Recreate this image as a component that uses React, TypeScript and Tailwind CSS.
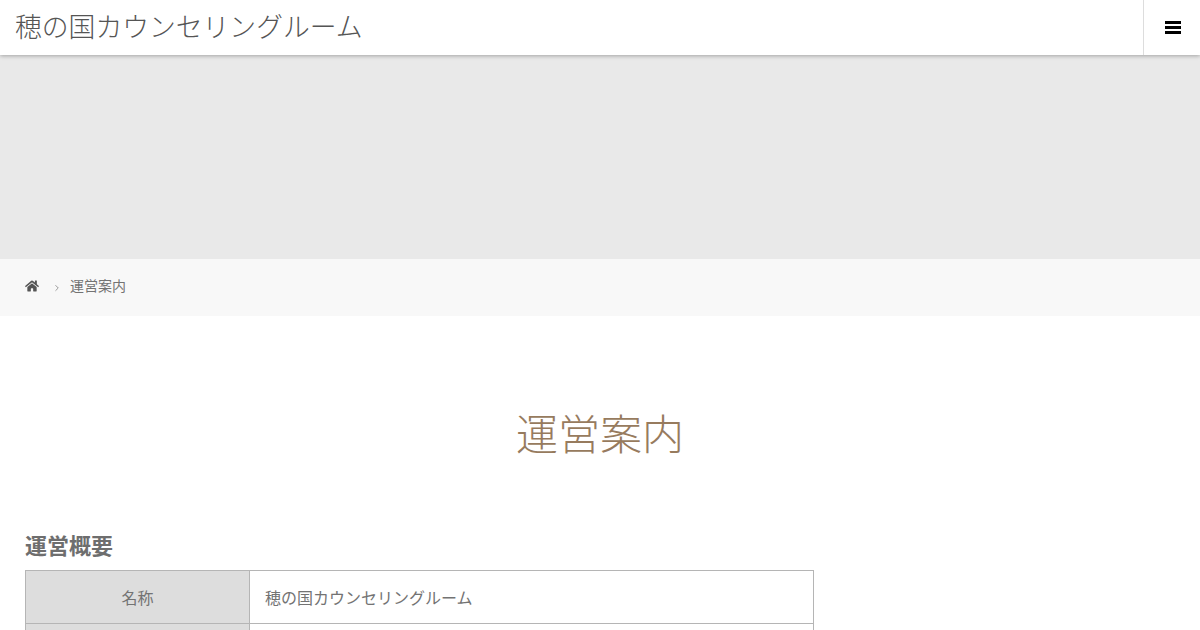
import { FaHome } from "react-icons/fa";
import { FiChevronRight } from "react-icons/fi";

const font = { fontFamily: '"Liberation Sans", "Noto Sans CJK JP", sans-serif' };

export default function App() {
  return (
    <div className="h-[630px] overflow-hidden bg-white text-[#737373]" style={font}>
      <header className="relative z-10 flex h-[55px] items-center justify-between bg-white shadow-[0_1px_4px_rgba(0,0,0,0.3)]">
        <h1 className="pl-[15px] pt-[1px] text-[26.8px] font-light leading-none text-[#555]">穂の国カウンセリングルーム</h1>
        <div className="flex h-full w-[57px] items-center justify-center border-l border-[#ddd] pl-[2px]">
          <div className="flex w-4 flex-col gap-[2px]">
            <span className="h-[3px] bg-black" />
            <span className="h-[3px] bg-black" />
            <span className="h-[3px] bg-black" />
          </div>
        </div>
      </header>

      <div className="h-[204px] bg-[#e9e9e9]" />

      <nav className="flex h-[57px] items-center bg-[#f8f8f8] pb-[4px] pl-[25px] text-sm">
        <FaHome size={14} className="text-[#555]" />
        <FiChevronRight size={10} className="ml-[13px] mt-[4px] text-[#888]" />
        <span className="ml-[8px]">運営案内</span>
      </nav>

      <main className="px-[25px]">
        <h2 className="mt-[93px] text-center text-[42px] font-light leading-[54px] text-[#977b5e]">運営案内</h2>
        <h3 className="mt-[68px] text-[22px] font-bold leading-[32px] text-[#6e6e6e]">運営概要</h3>
        <table className="mt-[7px] w-[789px] table-fixed border-collapse text-base">
          <tbody>
            <tr className="h-[53px]">
              <th className="w-[224px] border border-[#b5b5b5] bg-[#ddd] pt-[3px] font-normal">名称</th>
              <td className="border border-[#b5b5b5] px-[15px] pt-[3px]">穂の国カウンセリングルーム</td>
            </tr>
            <tr className="h-[53px]">
              <th className="border border-[#b5b5b5] bg-[#ddd] font-normal" />
              <td className="border border-[#b5b5b5] px-[15px]" />
            </tr>
          </tbody>
        </table>
      </main>
    </div>
  );
}
